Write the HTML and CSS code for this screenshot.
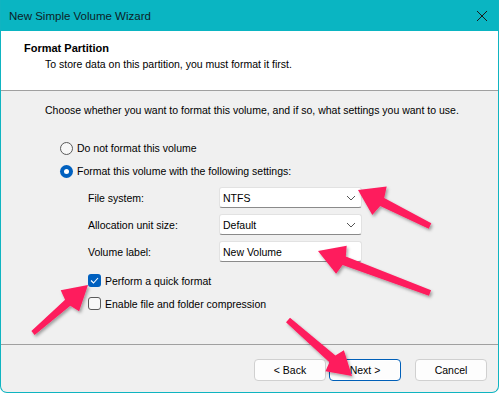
FILE: index.html
```html
<!DOCTYPE html>
<html>
<head>
<meta charset="utf-8">
<link rel="stylesheet" href="styles.css">
</head>
<body>
<div class="window">
  <div class="titlebar">
    <span class="title">New Simple Volume Wizard</span>
    <svg class="close" width="12" height="12" viewBox="0 0 12 12"><path d="M1 1L11 11M11 1L1 11" stroke="#1a1a1a" stroke-width="1" fill="none"/></svg>
  </div>
  <div class="header">
    <div class="h-title">Format Partition</div>
    <div class="h-sub">To store data on this partition, you must format it first.</div>
  </div>
  <div class="body">
    <div class="intro">Choose whether you want to format this volume, and if so, what settings you want to use.</div>
    <div class="radio-row first"><span class="radio"></span><span>Do not format this volume</span></div>
    <div class="radio-row second"><span class="radio on"></span><span>Format this volume with the following settings:</span></div>
    <div class="settings">
      <div class="field"><span class="label">File system:</span><div class="combo"><span>NTFS</span><svg width="10" height="6" viewBox="0 0 10 6"><path d="M1 1L5 5L9 1" stroke="#555" fill="none"/></svg></div></div>
      <div class="field"><span class="label">Allocation unit size:</span><div class="combo"><span>Default</span><svg width="10" height="6" viewBox="0 0 10 6"><path d="M1 1L5 5L9 1" stroke="#555" fill="none"/></svg></div></div>
      <div class="field"><span class="label">Volume label:</span><div class="input">New Volume</div></div>
    </div>
    <div class="check-row c1"><span class="check on"><svg width="9" height="7" viewBox="0 0 9 7"><path d="M1 3.5L3.5 6L8 1" stroke="#fff" stroke-width="1.1" fill="none"/></svg></span><span>Perform a quick format</span></div>
    <div class="check-row c2"><span class="check"></span><span>Enable file and folder compression</span></div>
  </div>
  <div class="footer">
    <button class="btn back">&lt; Back</button>
    <button class="btn next">Next &gt;</button>
    <button class="btn cancel">Cancel</button>
  </div>
  <svg class="arrows" width="499" height="393" viewBox="0 0 499 393">
    <defs>
      <filter id="sh" x="-20%" y="-20%" width="140%" height="140%">
        <feDropShadow dx="1.5" dy="2" stdDeviation="1.5" flood-color="#000" flood-opacity="0.35"/>
      </filter>
    </defs>
    <g fill="#fe1b5d" filter="url(#sh)">
      <polygon points="358,190 386.7,186.4 384.2,198 431.3,223.3 428.7,228.7 380.2,206 372.3,215"/>
      <polygon points="318,251 346.7,245.8 345.8,256.6 431.1,290.2 428.9,295.8 342.6,265 336.1,273.8"/>
      <polygon points="88,285 79.1,311.3 70.3,305.8 34.6,334.9 31.4,331.1 65.1,299.8 60.7,290.3"/>
      <polygon points="352,376 325.5,371.3 329.4,362.2 286,322.3 290,317.7 335.4,355.4 343.9,350.3"/>
    </g>
  </svg>
</div>
</body>
</html>
```
FILE: styles.css
```css
* { box-sizing: border-box; }
html, body { margin: 0; padding: 0; background: #fff; }
body { width: 499px; height: 393px; overflow: hidden; font-family: "Liberation Sans", Arial, sans-serif; font-size: 10.5px; color: #000; }
.window {
  position: relative;
  width: 499px; height: 393px;
  border: 1px solid #0fb4c1;
  border-top: none;
  border-radius: 0 0 7px 7px;
  background: #f0f0f0;
  display: flex; flex-direction: column;
  overflow: hidden;
}
.titlebar {
  height: 31px; background: #0ab5c2;
  display: flex; align-items: center; justify-content: space-between;
  padding: 0 10px 0 9px; margin: 0 -1px;
}
.title { font-family: "Liberation Sans", Arial, sans-serif; font-size: 11.5px; color: #0d2226; }
.close { margin-right: 1px; }
.header {
  height: 60px; background: #fff; border-bottom: 1px solid #a0a0a0;
  padding: 10px 0 0 23px;
}
.h-title { font-weight: bold; font-size: 11px; line-height: 14px; }
.h-sub { margin-left: 21px; margin-top: 2px; line-height: 14px; }
.body { height: 254px; padding: 12px 0 0 44px; display: flex; flex-direction: column; border-bottom: 1px solid #a0a0a0; }
.intro { line-height: 14px; }
.radio-row { display: flex; align-items: center; gap: 4px; height: 14px; margin-left: 15px; }
.radio-row.first { margin-top: 24px; }
.radio-row.second { margin-top: 9px; }
.radio { width: 13px; height: 13px; border-radius: 50%; border: 1px solid #5a5a5a; background: #f7f7f7; display: inline-block; }
.radio.on { border: none; background: #0060bf; display: flex; align-items: center; justify-content: center; }
.radio.on::after { content: ""; width: 5px; height: 5px; border-radius: 50%; background: #fff; }
.settings { margin-top: 9px; margin-left: 43px; display: flex; flex-direction: column; gap: 6px; }
.field { display: flex; align-items: center; height: 21px; }
.label { width: 131px; }
.combo, .input {
  width: 143px; height: 21px; background: #fff;
  border: 1px solid #e2e2e2; border-bottom-color: #8a8a8a; border-radius: 3px;
  display: flex; align-items: center; justify-content: space-between; padding: 0 4px 0 3px;
}
.combo svg { margin-right: 1px; }
.check-row { display: flex; align-items: center; gap: 4px; height: 13px; margin-left: 43px; }
.check-row.c1 { margin-top: 12px; }
.check-row.c2 { margin-top: 10px; }
.check { width: 13px; height: 13px; border: 1px solid #5a5a5a; border-radius: 3px; background: #f7f7f7; display: inline-block; }
.check.on { border: none; background: #0060bf; display: flex; align-items: center; justify-content: center; }
.footer { flex: 1; display: flex; padding: 14px 0 0 253px; gap: 3px; }
.btn {
  font-family: "Liberation Sans", Arial, sans-serif; font-size: 10.5px; color: #000;
  width: 72px; height: 22px; background: #fdfdfd; border: 1px solid #d0d0d0; border-radius: 4px; padding: 0;
}
.btn.next { border: 1px solid #005fb8; box-shadow: inset 0 0 0 1px #fff; }
.btn.cancel { margin-left: 11px; }
.arrows { position: absolute; left: -1px; top: 0; pointer-events: none; }
```
